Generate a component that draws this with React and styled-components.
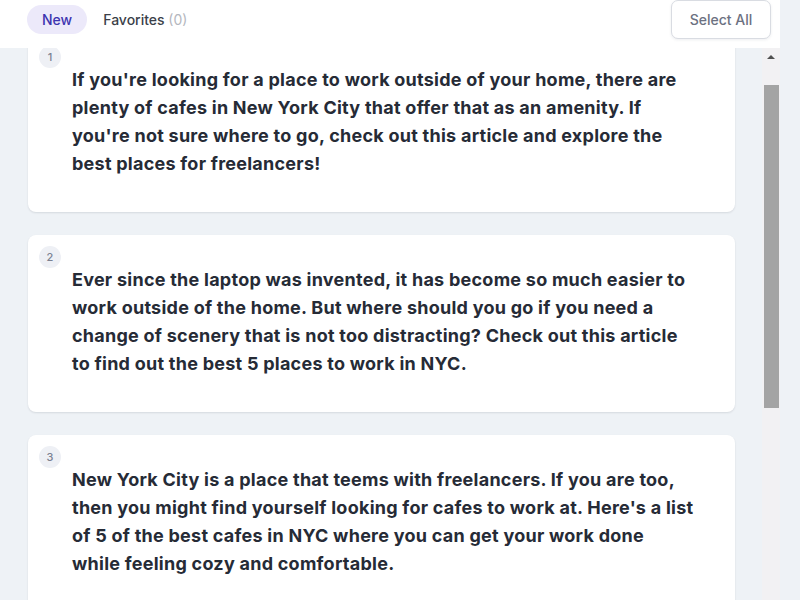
import React, { useLayoutEffect, useRef } from "react";
import styled, { createGlobalStyle } from "styled-components";

const GlobalStyle = createGlobalStyle`
  html, body {
    margin: 0;
    padding: 0;
    height: 100%;
    overflow: hidden;
    background: #eef2f6;
    font-family: Inter, "Noto Sans", sans-serif;
  }
`;

const Page = styled.div`
  width: 780px;
  display: flex;
  flex-direction: column;
`;

const Header = styled.header`
  height: 48px;
  box-sizing: border-box;
  background: #ffffff;
  display: flex;
  align-items: flex-start;
  justify-content: space-between;
  padding: 0 9px 0 27px;
`;

const Tabs = styled.nav`
  display: flex;
  align-items: center;
  gap: 16px;
  height: 39px;
`;

const Tab = styled.button`
  border: none;
  background: ${(p) => (p.$active ? "#ece9fa" : "transparent")};
  color: ${(p) => (p.$active ? "#3d34b0" : "#3b3f49")};
  font-family: Inter, sans-serif;
  font-size: 14px;
  font-weight: 500;
  height: 29px;
  padding: ${(p) => (p.$active ? "0 15px" : "0")};
  border-radius: 15px;
  cursor: pointer;
`;

const Count = styled.span`
  color: #b4b7be;
  font-weight: 400;
`;

const SelectButton = styled.button`
  width: 100px;
  height: 39px;
  border: 1px solid #d9dce2;
  border-radius: 7px;
  background: #fff;
  color: #6c7181;
  font-family: Inter, sans-serif;
  font-size: 14px;
  font-weight: 500;
  box-shadow: 0 1px 3px rgba(30, 40, 60, 0.08);
  cursor: pointer;
`;

const Viewport = styled.div`
  display: flex;
  height: 600px;
`;

const Scroller = styled.div`
  flex: 1;
  overflow: hidden;
`;

const ScrollTrack = styled.div`
  width: 18px;
  flex: none;
  background: #f2f1f3;
  display: flex;
  flex-direction: column;
  align-items: flex-end;
`;

const ArrowButton = styled.div`
  width: 18px;
  height: 17px;
  display: flex;
  align-items: center;
  justify-content: center;
  margin-bottom: 20px;
`;

const Thumb = styled.div`
  width: 15px;
  height: 323px;
  margin-right: 1px;
  background: #a4a4a4;
`;

const List = styled.div`
  display: flex;
  flex-direction: column;
  gap: 23px;
  padding: 24px 27px 50px 28px;
`;

const Card = styled.article`
  background: #ffffff;
  border-radius: 8px;
  box-shadow: 0 1px 2px rgba(30, 40, 60, 0.12);
  padding: 11px 41px 34px 11px;
`;

const Badge = styled.span`
  display: flex;
  align-items: center;
  justify-content: center;
  width: 22px;
  height: 22px;
  border-radius: 50%;
  background: #eef0f5;
  color: #7b8191;
  font-size: 11px;
  font-weight: 500;
`;

const Body = styled.p`
  margin: -2px 0 0 33px;
  font-family: Inter, sans-serif;
  font-size: 18px;
  font-weight: 700;
  line-height: 28px;
  letter-spacing: 0.25px;
  color: #262b36;
`;

const items = [
  "If you're looking for a place to work outside of your home, there are plenty of cafes in New York City that offer that as an amenity. If you're not sure where to go, check out this article and explore the best places for freelancers!",
  "Ever since the laptop was invented, it has become so much easier to work outside of the home. But where should you go if you need a change of scenery that is not too distracting? Check out this article to find out the best 5 places to work in NYC.",
  "New York City is a place that teems with freelancers. If you are too, then you might find yourself looking for cafes to work at. Here's a list of 5 of the best cafes in NYC where you can get your work done while feeling cozy and comfortable.",
  "Working from home every day can get lonely. Luckily, New York City has no shortage of quiet cafes with fast wifi and good coffee. Read this article to discover the top spots where remote workers love to spend their day.",
  "Looking for a change of pace from your home office? These cafes in NYC are perfect for getting things done, with plenty of outlets, comfy seating and great drinks. Find your new favorite place to work in this guide.",
];

export default function App() {
  const ref = useRef(null);
  useLayoutEffect(() => {
    if (ref.current) ref.current.scrollTop = 37;
  }, []);

  return (
    <>
      <GlobalStyle />
      <Page>
        <Header>
          <Tabs>
            <Tab $active>New</Tab>
            <Tab>
              Favorites <Count>(0)</Count>
            </Tab>
          </Tabs>
          <SelectButton>Select All</SelectButton>
        </Header>
        <Viewport>
          <Scroller ref={ref}>
            <List>
              {items.map((text, i) => (
                <Card key={i}>
                  <Badge>{i + 1}</Badge>
                  <Body>{text}</Body>
                </Card>
              ))}
            </List>
          </Scroller>
          <ScrollTrack>
            <ArrowButton>
              <svg width="8" height="4" viewBox="0 0 8 4">
                <path d="M0 4 L4 0 L8 4z" fill="#505050" />
              </svg>
            </ArrowButton>
            <Thumb />
          </ScrollTrack>
        </Viewport>
      </Page>
    </>
  );
}
